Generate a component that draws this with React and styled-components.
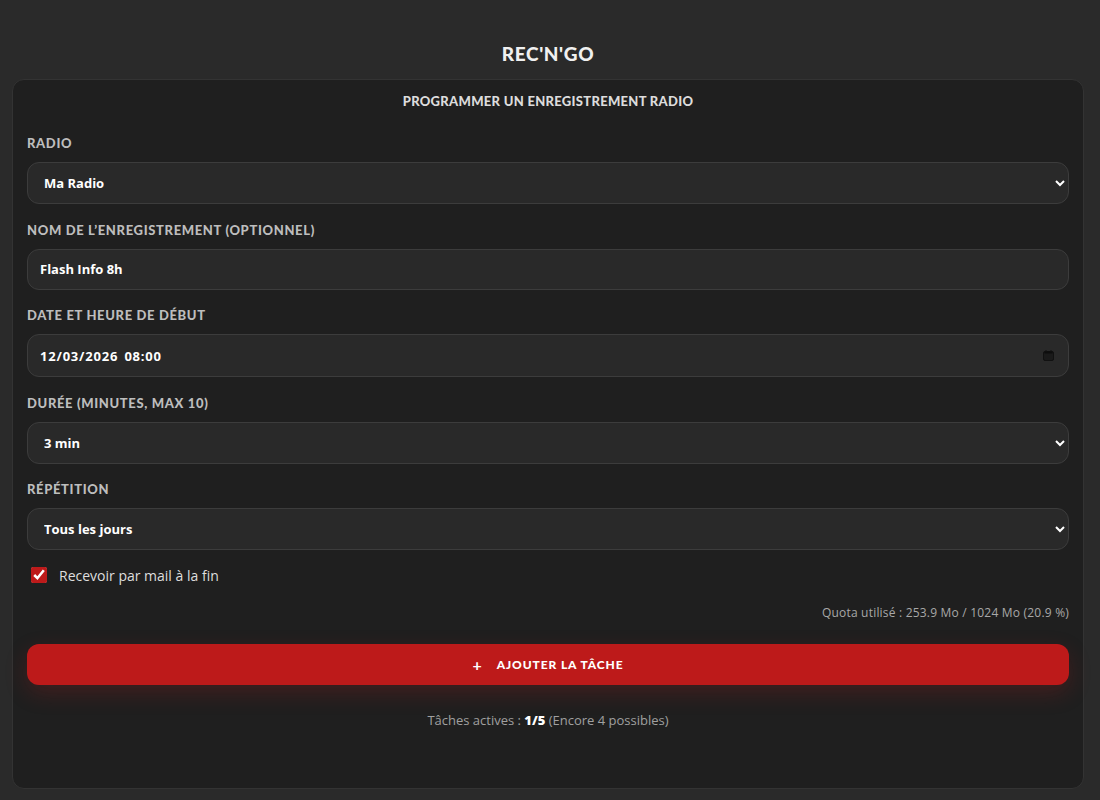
import React, { useState } from "react";
import styled, { createGlobalStyle } from "styled-components";

const GlobalStyle = createGlobalStyle`
  html, body {
    margin: 0;
    background: #2a2a2a;
    color: #eee;
    font-family: "Open Sans", "Liberation Sans", sans-serif;
  }
  * { box-sizing: border-box; }
`;

const Page = styled.div`
  min-height: 800px;
  padding: 41px 16px 10px 12px;
  display: flex;
  flex-direction: column;
  align-items: stretch;
`;

const Title = styled.h1`
  margin: 0 0 12px;
  text-align: center;
  font-family: "Lato", sans-serif;
  font-weight: 900;
  font-size: 19px;
  line-height: 26px;
  letter-spacing: 0.6px;
  color: #f0f0f0;
`;

const Card = styled.form`
  background: #1f1f1f;
  border: 1px solid #333;
  border-radius: 12px;
  padding: 12px 14px 59px;
  display: flex;
  flex-direction: column;
`;

const CardTitle = styled.h2`
  margin: 0 0 25px;
  text-align: center;
  font-family: "Lato", sans-serif;
  font-weight: 900;
  font-size: 13px;
  line-height: 18px;
  letter-spacing: 0.3px;
  color: #dcdcdc;
`;

const Field = styled.div`
  display: flex;
  flex-direction: column;
  gap: 11px;
  margin-bottom: 17.5px;
`;

const Label = styled.label`
  font-family: "Lato", sans-serif;
  font-weight: 900;
  font-size: 13px;
  line-height: 16px;
  letter-spacing: 0.65px;
  color: #bdbdbd;
  text-transform: uppercase;
`;

const controlBase = `
  width: 100%;
  height: 42px;
  background: #292929;
  border: 1px solid #3c3c3c;
  border-radius: 12px;
  color: #fff;
  font-family: "Open Sans", sans-serif;
  font-weight: 700;
  font-size: 13px;
  color-scheme: dark;
  outline: none;
`;

const Select = styled.select`
  ${controlBase}
  padding: 0 8px 0 12px;
`;

const TextInput = styled.input`
  ${controlBase}
  height: 41px;
  padding: 0 12px;
`;

const DateBox = styled.div`
  ${controlBase}
  height: 43px;
  display: flex;
  align-items: center;
  justify-content: space-between;
  padding: 0 14px 0 12px;
`;

const DateText = styled.span`
  letter-spacing: 0.8px;
  word-spacing: 2px;
`;

const CheckRow = styled.label`
  display: flex;
  align-items: center;
  gap: 12px;
  padding-left: 4px;
  margin-top: -2px;
  font-size: 14px;
  color: #dedede;
`;

const Check = styled.input`
  width: 16px;
  height: 16px;
  margin: 0;
  accent-color: #bd1a1a;
`;

const Quota = styled.div`
  margin-top: 19px;
  text-align: right;
  font-size: 12px;
  letter-spacing: 0.2px;
  color: #a8a8a8;
`;

const AddButton = styled.button`
  margin-top: 23px;
  height: 41px;
  border: none;
  border-radius: 12px;
  background: #bd1a1a;
  color: #fff;
  display: flex;
  align-items: center;
  justify-content: center;
  gap: 14px;
  font-family: "Lato", sans-serif;
  font-weight: 900;
  font-size: 12px;
  letter-spacing: 0.9px;
  box-shadow: 0 8px 22px rgba(189, 26, 26, 0.22);
  cursor: pointer;
`;

const Plus = styled.span`
  font-size: 16px;
  font-weight: 700;
`;

const Footer = styled.p`
  margin: 26px 0 0;
  text-align: center;
  font-size: 13px;
  color: #a0a0a0;

  b {
    color: #fff;
    font-weight: 800;
  }
`;

function CalendarIcon() {
  return (
    <svg width="11" height="11" viewBox="0 0 11 11">
      <rect x="0.5" y="1.5" width="10" height="9" rx="1.5" fill="#1a1a1a" stroke="#111" />
      <rect x="1.5" y="1.5" width="8" height="2" fill="#0d0d0d" />
      <rect x="2.5" y="0" width="1" height="2" fill="#111" />
      <rect x="7.5" y="0" width="1" height="2" fill="#111" />
    </svg>
  );
}

export default function App() {
  const [mail, setMail] = useState(true);
  const [name, setName] = useState("Flash Info 8h");

  return (
    <Page>
      <GlobalStyle />
      <Title>REC'N'GO</Title>
      <Card onSubmit={(e) => e.preventDefault()}>
        <CardTitle>PROGRAMMER UN ENREGISTREMENT RADIO</CardTitle>

        <Field>
          <Label>Radio</Label>
          <Select defaultValue="ma">
            <option value="ma">Ma Radio</option>
          </Select>
        </Field>

        <Field>
          <Label>Nom de l’enregistrement (optionnel)</Label>
          <TextInput value={name} onChange={(e) => setName(e.target.value)} />
        </Field>

        <Field>
          <Label>Date et heure de début</Label>
          <DateBox>
            <DateText>12/03/2026 08:00</DateText>
            <CalendarIcon />
          </DateBox>
        </Field>

        <Field>
          <Label>Durée (minutes, max 10)</Label>
          <Select defaultValue="3">
            <option value="3">3 min</option>
          </Select>
        </Field>

        <Field>
          <Label>Répétition</Label>
          <Select defaultValue="daily">
            <option value="daily">Tous les jours</option>
          </Select>
        </Field>

        <CheckRow>
          <Check type="checkbox" checked={mail} onChange={(e) => setMail(e.target.checked)} />
          Recevoir par mail à la fin
        </CheckRow>

        <Quota>Quota utilisé : 253.9 Mo / 1024 Mo (20.9 %)</Quota>

        <AddButton type="submit">
          <Plus>+</Plus>
          AJOUTER LA TÂCHE
        </AddButton>

        <Footer>
          Tâches actives : <b>1/5</b> (Encore 4 possibles)
        </Footer>
      </Card>
    </Page>
  );
}
